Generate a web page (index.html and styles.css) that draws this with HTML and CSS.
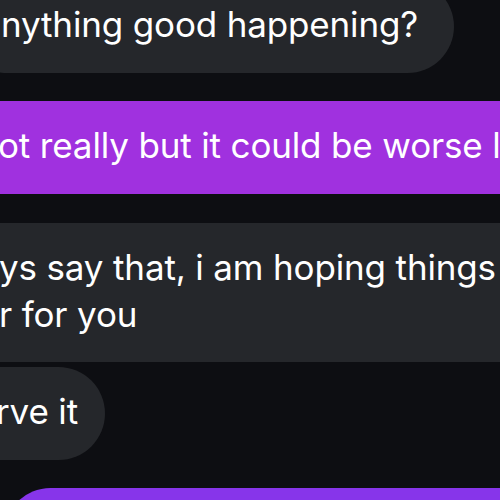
FILE: index.html
```html
<!DOCTYPE html>
<html>
<head>
<meta charset="utf-8">
<link rel="stylesheet" href="styles.css">
</head>
<body>
<div class="chat">
  <div class="bubble recv b1">nything good happening?</div>
  <div class="bubble sent b2">ot really but it could be worse l</div>
  <div class="bubble recv b3">ys say that, i am hoping things<br>r for you</div>
  <div class="bubble recv b4">rve it</div>
  <div class="bubble sent b5">&nbsp;</div>
</div>
</body>
</html>
```
FILE: styles.css
```css
html, body {
  margin: 0;
  padding: 0;
  width: 500px;
  height: 500px;
  overflow: hidden;
  background: #0d0e12;
}
.chat {
  display: flex;
  flex-direction: column;
  align-items: flex-start;
  margin-top: -20px;
}
.bubble {
  font-family: Inter, "Liberation Sans", sans-serif;
  font-size: 35px;
  letter-spacing: -0.15px;
  line-height: 47px;
  color: #ffffff;
  white-space: nowrap;
  padding: 21px 36px 25px 40px;
  margin-left: -40px;
  border-radius: 47px;
  box-sizing: border-box;
}
.recv { background: #25272b; }
.sent { background: #a031df; }
.b1 { height: 93px; margin-left: -39px; padding-right: 36px; }
.b2 { margin-top: 28px; height: 93px; width: 600px; border-radius: 0; margin-left: -42px; }
.b3 { margin-top: 29px; height: 139px; width: 600px; border-radius: 30px; margin-left: -41px; }
.b4 { margin-top: 5px; height: 93px; padding-right: 27px; margin-left: -44px; }
.b5 { margin-top: 28px; margin-left: 4px; width: 600px; height: 93px; background: #8735ea; }
```
